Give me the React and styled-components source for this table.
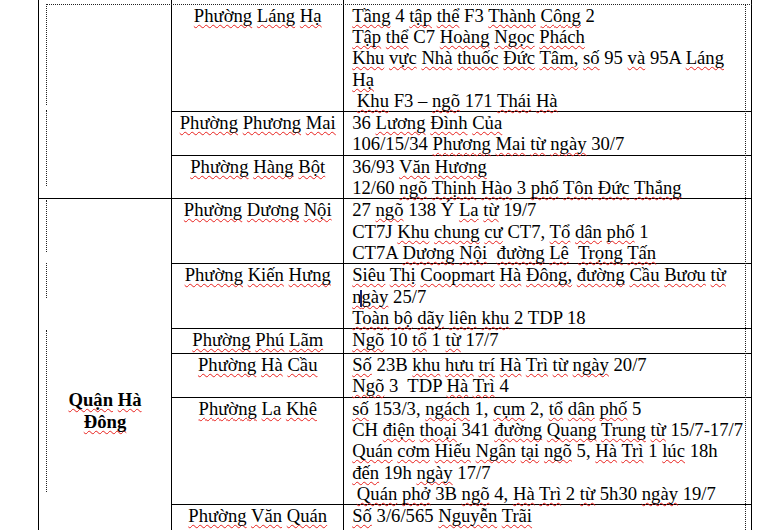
import React from "react";
import styled, { createGlobalStyle } from "styled-components";

const GlobalStyle = createGlobalStyle`
  html, body {
    margin: 0;
    padding: 0;
    background: #fff;
    overflow: hidden;
  }
  body {
    font-family: "Liberation Serif", "Times New Roman", serif;
    color: #000;
  }
`;

const Page = styled.div`
  position: relative;
  height: 530px;
  overflow: hidden;
  padding-left: 38px;
`;

const Table = styled.table`
  border-collapse: collapse;
  table-layout: fixed;
  font-size: 18.67px;
  line-height: 21.3px;

  tr:first-child td {
    border-top: none;
    padding-top: 4.7px;
  }
`;

const Cell = styled.td`
  border: 1px solid #000;
  padding: 0 7.7px;
  vertical-align: top;
  white-space: pre;
  overflow: visible;
`;

const DistrictCell = styled(Cell)`
  text-align: center;
  font-weight: bold;
  padding-top: ${(p) => (p.$offset ? p.$offset : 0)}px;
`;

const WardCell = styled(Cell)`
  text-align: center;
  height: ${(p) => (p.$height ? `${p.$height}px` : "auto")};
`;

const AddrCell = styled(Cell)`
  text-align: left;
`;

const Line = styled.div`
  height: 21.3px;
`;

const Squiggle = styled.span`
  text-decoration: underline wavy #e8201c;
  text-decoration-thickness: 1px;
  text-underline-offset: 2px;
  text-decoration-skip-ink: none;
`;

// the text cursor left in "n|gày"
const Caret = styled.span`
  display: inline-block;
  width: 2px;
  height: 17px;
  background: #14246e;
  margin: 0 -1px;
  vertical-align: -4px;
`;

// Word's dotted "text boundaries"
const Boundary = styled.div`
  position: absolute;
  pointer-events: none;
  top: ${(p) => p.$top}px;
  left: ${(p) => p.$left}px;
  width: ${(p) => (p.$w ? `${p.$w}px` : "0")};
  height: ${(p) => (p.$h ? `${p.$h}px` : "0")};
  border-left: ${(p) => (p.$h ? "1px dotted #222" : "none")};
  border-top: ${(p) => (p.$w ? "1px dotted #222" : "none")};
`;

const isWord = (tok) => /\p{Ll}/u.test(tok) && !/^\d/.test(tok);

const renderText = (text) =>
  text.split(/(\s+)/).map((tok, i) => {
    if (!tok) return null;
    if (tok.includes("|")) {
      const [a, b] = tok.split("|");
      return (
        <Squiggle key={i}>
          {a}
          <Caret />
          {b}
        </Squiggle>
      );
    }
    return isWord(tok) ? <Squiggle key={i}>{tok}</Squiggle> : tok;
  });

const Lines = ({ lines }) =>
  lines.map((l, i) => <Line key={i}>{renderText(l)}</Line>);

const groups = [
  {
    district: null,
    wards: [
      {
        name: "Phường Láng Hạ",
        lines: [
          "Tầng 4 tập thể F3 Thành Công 2",
          "Tập thể C7 Hoàng Ngọc Phách",
          "Khu vực Nhà thuốc Đức Tâm, số 95 và 95A Láng",
          "Hạ",
          " Khu F3 – ngõ 171 Thái Hà",
        ],
      },
      {
        name: "Phường Phương Mai",
        lines: ["36 Lương Đình Của", "106/15/34 Phương Mai từ ngày 30/7"],
      },
      {
        name: "Phường Hàng Bột",
        lines: ["36/93 Văn Hương", "12/60 ngõ Thịnh Hào 3 phố Tôn Đức Thắng"],
      },
    ],
  },
  {
    district: ["Quận Hà", "Đông"],
    offset: 190,
    wards: [
      {
        name: "Phường Dương Nội",
        lines: [
          "27 ngõ 138 Ý La từ 19/7",
          "CT7J Khu chung cư CT7, Tổ dân phố 1",
          "CT7A Dương Nội  đường Lê  Trọng Tấn",
        ],
      },
      {
        name: "Phường Kiến Hưng",
        lines: [
          "Siêu Thị Coopmart Hà Đông, đường Cầu Bươu từ",
          "n|gày 25/7",
          "Toàn bộ dãy liên khu 2 TDP 18",
        ],
      },
      { name: "Phường Phú Lãm", lines: ["Ngõ 10 tổ 1 từ 17/7"], height: 24 },
      {
        name: "Phường Hà Cầu",
        lines: ["Số 23B khu hưu trí Hà Trì từ ngày 20/7", "Ngõ 3  TDP Hà Trì 4"],
      },
      {
        name: "Phường La Khê",
        lines: [
          "số 153/3, ngách 1, cụm 2, tổ dân phố 5",
          "CH điện thoại 341 đường Quang Trung từ 15/7-17/7",
          "Quán cơm Hiếu Ngân tại ngõ 5, Hà Trì 1 lúc 18h",
          "đến 19h ngày 17/7",
          " Quán phở 3B ngõ 4, Hà Trì 2 từ 5h30 ngày 19/7",
        ],
      },
      { name: "Phường Văn Quán", lines: ["Số 3/6/565 Nguyễn Trãi", ""] },
    ],
  },
];

const leftDots = [
  [4, 101],
  [110, 76],
  [200, 52],
  [263, 35],
  [330, 162],
];

export default function App() {
  return (
    <>
      <GlobalStyle />
      <Page>
        <Table>
          <colgroup>
            <col style={{ width: 133 }} />
            <col style={{ width: 172 }} />
            <col style={{ width: 408 }} />
          </colgroup>
          <tbody>
            {groups.map((g, gi) =>
              g.wards.map((w, wi) => (
                <tr key={`${gi}-${wi}`}>
                  {wi === 0 && (
                    <DistrictCell rowSpan={g.wards.length} $offset={g.offset}>
                      {g.district && <Lines lines={g.district} />}
                    </DistrictCell>
                  )}
                  <WardCell $height={w.height}>{renderText(w.name)}</WardCell>
                  <AddrCell>
                    <Lines lines={w.lines} />
                  </AddrCell>
                </tr>
              ))
            )}
          </tbody>
        </Table>
        <Boundary $top={4} $left={46} $w={706} />
        {leftDots.map(([t, h]) => (
          <Boundary key={t} $top={t} $left={46} $h={h} />
        ))}
        <Boundary $top={4} $left={745} $h={530} />
      </Page>
    </>
  );
}
